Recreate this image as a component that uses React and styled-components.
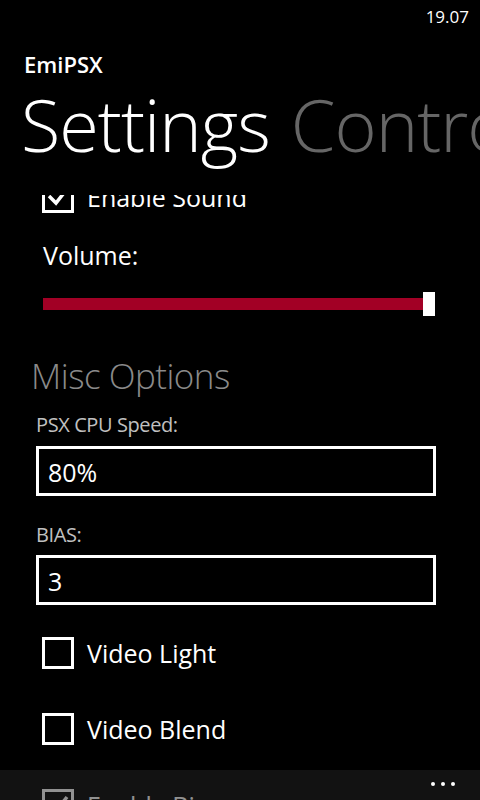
import { useState } from 'react';
import styled, { createGlobalStyle } from 'styled-components';

const GlobalStyle = createGlobalStyle`
  html, body {
    margin: 0;
    padding: 0;
    background: #000;
  }
  body {
    font-family: 'Open Sans', 'Noto Sans', sans-serif;
    color: #fff;
  }
`;

const Phone = styled.div`
  position: relative;
  width: 480px;
  height: 800px;
  background: #000;
  overflow: hidden;
  display: flex;
  flex-direction: column;
`;

const StatusBar = styled.div`
  height: 32px;
  flex-shrink: 0;
  display: flex;
  justify-content: flex-end;
  align-items: center;
  padding-right: 11px;
  font-size: 17px;
  color: #fff;
`;

const AppTitle = styled.div`
  margin: 12px 0 0 24px;
  height: 40px;
  line-height: 40px;
  font-size: 22px;
  font-weight: 600;
  flex-shrink: 0;
`;

const PivotHeaders = styled.div`
  display: flex;
  gap: 21px;
  margin-left: 21px;
  height: 80px;
  line-height: 80px;
  white-space: nowrap;
  flex-shrink: 0;
`;

const PivotTitle = styled.span`
  font-size: 72px;
  font-weight: 300;
  letter-spacing: -1px;
  color: ${(p) => (p.$active ? '#fff' : '#666')};
`;

const Viewport = styled.div`
  margin-top: 31px;
  flex: 1;
  overflow: hidden;
`;

const ScrollContent = styled.div`
  margin-top: -36px;
  display: flex;
  flex-direction: column;
`;

const CheckRow = styled.label`
  height: 76px;
  display: flex;
  align-items: center;
  gap: 13px;
  padding-left: 42px;
  margin-top: ${(p) => p.$mt || 0}px;
  font-size: 25px;
  cursor: pointer;
`;

const Box = styled.span`
  width: 32px;
  height: 32px;
  box-sizing: border-box;
  border: 3px solid #fff;
  display: flex;
  align-items: center;
  justify-content: center;
  flex-shrink: 0;
`;

const FieldLabel = styled.div`
  padding-left: ${(p) => p.$indent}px;
  margin-top: ${(p) => p.$mt}px;
  font-size: ${(p) => p.$size}px;
  line-height: ${(p) => p.$lh}px;
  color: ${(p) => p.$color};
  font-weight: ${(p) => p.$weight || 400};
  letter-spacing: ${(p) => p.$ls || 0}px;
`;

const Slider = styled.div`
  margin: 12px 0 0 43px;
  width: 392px;
  height: 40px;
  display: flex;
  align-items: center;
`;

const Track = styled.div`
  flex: 1;
  height: 12px;
  background: #a20025;
`;

const Thumb = styled.div`
  width: 12px;
  height: 24px;
  background: #fff;
`;

const TextBox = styled.input`
  margin: ${(p) => p.$mt}px 0 0 36px;
  width: 400px;
  height: 50px;
  box-sizing: border-box;
  border: 3px solid #fff;
  background: #000;
  color: #fff;
  font-family: 'Open Sans', 'Noto Sans', sans-serif;
  font-size: 25px;
  padding: 1px 0 0 9px;
  outline: none;
  border-radius: 0;
`;

const AppBar = styled.div`
  position: absolute;
  left: 0;
  right: 0;
  bottom: 0;
  height: 30px;
  background: rgba(36, 36, 36, 0.5);
  display: flex;
  justify-content: flex-end;
  align-items: center;
  gap: 6px;
  padding-right: 25px;
  box-sizing: border-box;
`;

const Dot = styled.span`
  width: 4px;
  height: 4px;
  border-radius: 50%;
  background: #fff;
  margin-bottom: 2px;
`;

const Check = () => (
  <svg width="24" height="24" viewBox="0 0 24 24">
    <path d="M3 11 L10 18 L21 4" fill="none" stroke="#fff" strokeWidth="3.5" />
  </svg>
);

const CheckOption = ({ label, checked, onToggle, mt }) => (
  <CheckRow $mt={mt} onClick={onToggle}>
    <Box>{checked && <Check />}</Box>
    {label}
  </CheckRow>
);

export default function App() {
  const [opts, setOpts] = useState({
    sound: true,
    light: false,
    blend: false,
    bias: true,
  });
  const [speed, setSpeed] = useState('80%');
  const [bias, setBias] = useState('3');

  const toggle = (key) => setOpts((o) => ({ ...o, [key]: !o[key] }));

  return (
    <Phone>
      <GlobalStyle />
      <StatusBar>19.07</StatusBar>
      <AppTitle>EmiPSX</AppTitle>
      <PivotHeaders>
        <PivotTitle $active>Settings</PivotTitle>
        <PivotTitle>Controls</PivotTitle>
      </PivotHeaders>
      <Viewport>
        <ScrollContent>
          <CheckOption label="Enable Sound" checked={opts.sound} onToggle={() => toggle('sound')} />
          <FieldLabel $indent={43} $mt={3} $size={25} $lh={34} $color="#fff">
            Volume:
          </FieldLabel>
          <Slider>
            <Track />
            <Thumb />
          </Slider>
          <FieldLabel $indent={31} $mt={28} $size={35} $lh={48} $color="#8a8a8a" $weight={300} $ls={-0.5}>
            Misc Options
          </FieldLabel>
          <FieldLabel $indent={36} $mt={11} $size={20} $lh={28} $color="#c0c0c0" $ls={-0.4}>
            PSX CPU Speed:
          </FieldLabel>
          <TextBox $mt={7} value={speed} onChange={(e) => setSpeed(e.target.value)} />
          <FieldLabel $indent={36} $mt={25} $size={20} $lh={28} $color="#c0c0c0" $ls={-0.4}>
            BIAS:
          </FieldLabel>
          <TextBox $mt={6} value={bias} onChange={(e) => setBias(e.target.value)} />
          <CheckOption label="Video Light" mt={10} checked={opts.light} onToggle={() => toggle('light')} />
          <CheckOption label="Video Blend" checked={opts.blend} onToggle={() => toggle('blend')} />
          <CheckOption label="Enable Bias" checked={opts.bias} onToggle={() => toggle('bias')} />
        </ScrollContent>
      </Viewport>
      <AppBar>
        <Dot />
        <Dot />
        <Dot />
      </AppBar>
    </Phone>
  );
}
